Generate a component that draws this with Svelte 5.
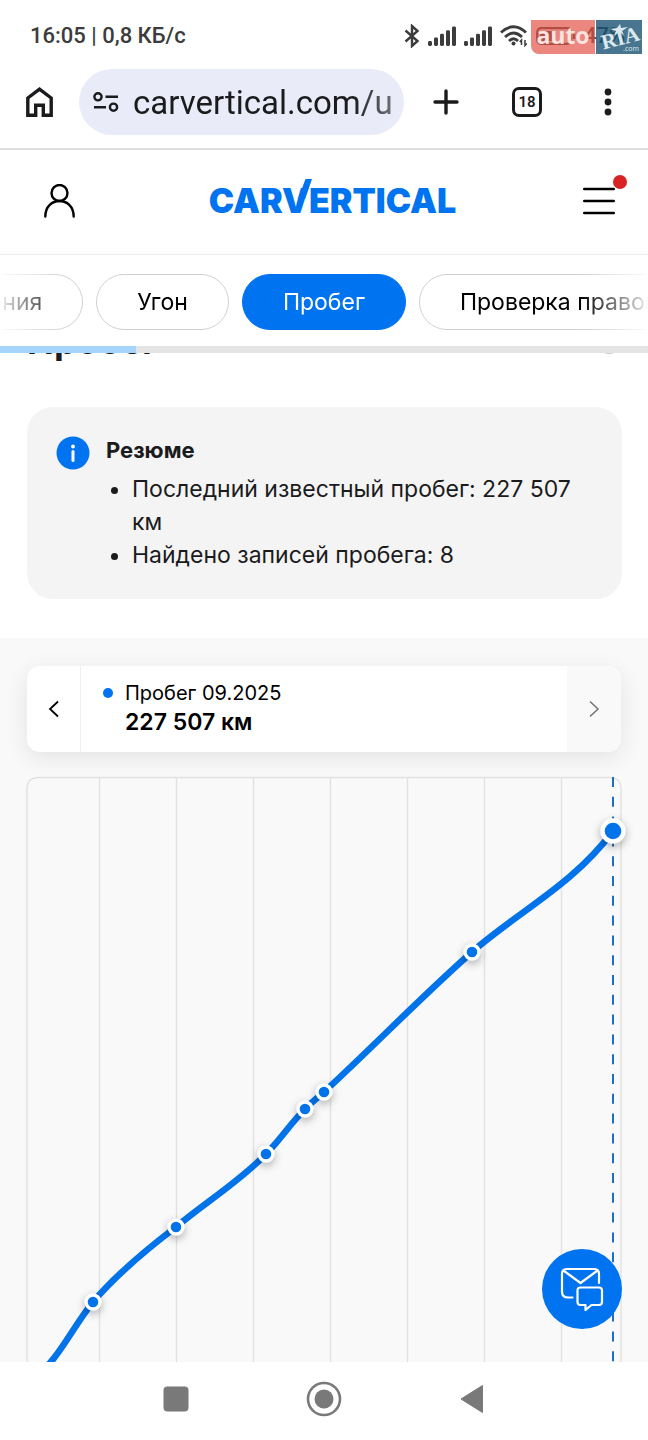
<script lang="ts">
  // Mobile report page: phone chrome, report navigation, then the mileage section and its chart.
  import { onMount } from "svelte";

  const tabs = [
    { id: "damage", label: "Повреждения" },
    { id: "theft", label: "Угон" },
    { id: "mileage", label: "Пробег" },
    { id: "title", label: "Проверка правового статуса" },
  ];
  let active = $state("mileage");
  let tabBar: HTMLElement;

  // Keep the active tab in the middle of the strip.
  function centerActive() {
    const tab = tabBar.querySelector<HTMLElement>(".active");
    if (tab) tabBar.scrollLeft = tab.offsetLeft + tab.offsetWidth / 2 - tabBar.clientWidth / 2;
  }
  onMount(centerActive);

  const gridLines = [73, 150, 227, 304, 381, 458, 535];
  const points = [
    { x: 66, y: 525 },
    { x: 149, y: 450 },
    { x: 239, y: 377 },
    { x: 278, y: 332 },
    { x: 297, y: 315 },
    { x: 445, y: 175 },
  ];
  const current = { x: 586, y: 54 };
  const curve =
    "M2 605 C32 584 42 555 66 525 C88 499 120 472 149 450 C180 424 212 405 239 377 " +
    "C254 362 263 347 278 332 C284 326 290 321 297 315 C347 269 394 220 445 175 C492 134 546 108 586 54";

  const signalBars = [0, 1, 2, 3, 4];
</script>

{#snippet signal()}
  <svg width="28" height="20" viewBox="0 0 28 20" aria-hidden="true">
    {#each signalBars as i}
      <rect x={i * 6} y={15 - i * 3.6} width="4" height={5 + i * 3.6} rx="1.4" fill="#3c3c3c" />
    {/each}
  </svg>
{/snippet}

<div class="screen">
  <div class="status">
    <span class="clock">16:05 | 0,8 КБ/с</span>
    <div class="status-icons">
      <svg width="16" height="24" viewBox="0 0 16 24" fill="none" stroke="#3c3c3c" stroke-width="2.4" aria-hidden="true">
        <path d="M1.5 6.5 L13.5 17 L8 22 V2 L13.5 7 L1.5 17.5" />
      </svg>
      {@render signal()}
      {@render signal()}
      <svg width="28" height="22" viewBox="0 0 28 22" fill="none" stroke="#3c3c3c" stroke-width="2.8" aria-hidden="true">
        <path d="M1 7.5 Q13.5 -4 26 7.5" />
        <path d="M5 12 Q13.5 4 22 12" />
        <path d="M9 16 Q13.5 11.5 18 16" />
        <circle cx="13.5" cy="18.5" r="2" fill="#3c3c3c" stroke="none" />
        <path d="M21.5 20 V15 L19.8 17 M25 15 V20.5 L26.7 18.5" stroke-width="1.5" />
      </svg>
      <svg class="battery" width="40" height="18" viewBox="0 0 40 18" fill="none" aria-hidden="true">
        <rect x="1.2" y="1.2" width="34" height="15.6" rx="4" stroke="#3c3c3c" stroke-width="2.2" />
        <rect x="4" y="4" width="14" height="10" rx="2" fill="#3c3c3c" />
        <path d="M38 6 V12" stroke="#3c3c3c" stroke-width="2.4" />
      </svg>
      <span class="charge">47%</span>
    </div>
    <div class="watermark">
      <span class="auto">auto</span>
      <span class="ria">
        <svg class="star" width="18" height="12" viewBox="0 0 18 12" aria-hidden="true">
          <path d="M10 0 L11 4 L18 3 L12 7 L14 11 L9 8 L4 12 L6 7 L0 5 L7 4 Z" fill="#dce8ee" />
        </svg>
        <span class="ria-name">RIA</span>
        <span class="ria-com">.com</span>
      </span>
    </div>
  </div>

  <div class="browser">
    <button class="home" aria-label="Главная">
      <svg width="27" height="30" viewBox="0 0 27 30" fill="none" stroke="#1b1b1d" stroke-width="3.4" aria-hidden="true">
        <path d="M1.8 11 L13.5 2.2 L25.2 11 V28.2 H17.3 V18.2 H9.7 V28.2 H1.8 Z" />
      </svg>
    </button>
    <label class="address">
      <svg width="26" height="20" viewBox="0 0 26 20" fill="none" stroke="#1b1b1d" stroke-width="2.4" aria-hidden="true">
        <circle cx="5" cy="4.8" r="3.6" />
        <path d="M12.5 4.8 H25 M1 15.2 H13" />
        <circle cx="20.5" cy="15.2" r="3.6" />
      </svg>
      <input type="text" value="carvertical.com/u" aria-label="Адрес" />
    </label>
    <div class="browser-actions">
      <button aria-label="Новая вкладка">
        <svg width="26" height="26" viewBox="0 0 26 26" stroke="#1b1b1d" stroke-width="3.4" stroke-linecap="round" aria-hidden="true">
          <path d="M13 2 V24 M2 13 H24" />
        </svg>
      </button>
      <button aria-label="Вкладки"><span class="tab-count">18</span></button>
      <button aria-label="Меню браузера">
        <svg width="8" height="28" viewBox="0 0 8 28" fill="#1b1b1d" aria-hidden="true">
          <circle cx="4" cy="4" r="3.4" />
          <circle cx="4" cy="14" r="3.4" />
          <circle cx="4" cy="24" r="3.4" />
        </svg>
      </button>
    </div>
  </div>

  <header class="site">
    <button class="account" aria-label="Профиль">
      <svg width="32" height="34" viewBox="0 0 32 34" fill="none" stroke="#000" stroke-width="2.4" stroke-linecap="round" aria-hidden="true">
        <circle cx="15.5" cy="9" r="8" />
        <path d="M1.3 32.5 C1.3 11.8 29.7 11.8 29.7 32.5" />
      </svg>
    </button>
    <a class="logo" href="/">
      CAR<span class="logo-v">V<svg width="14" height="20" viewBox="0 0 14 20" aria-hidden="true"><path d="M7.5 0 H14 L7 20 H0 Z" /></svg></span>ERTICAL
    </a>
    <button class="menu" aria-label="Меню">
      <svg width="32" height="28" viewBox="0 0 32 28" stroke="#000" stroke-width="2.6" stroke-linecap="round" aria-hidden="true">
        <path d="M1.3 2 H30.7 M1.3 14 H30.7 M1.3 26 H30.7" />
      </svg>
      <span class="alert"></span>
    </button>
  </header>

  <nav class="tabs" bind:this={tabBar}>
    {#each tabs as tab (tab.id)}
      <button class="tab" class:active={tab.id === active} onclick={() => (active = tab.id)}>{tab.label}</button>
    {/each}
  </nav>
  <div class="progress"><div class="progress-fill"></div></div>

  <main>
    <section class="intro">
      <div class="title-row">
        <h2>Пробег</h2>
        <span class="help"></span>
      </div>
      <div class="summary">
        <svg width="34" height="34" viewBox="0 0 34 34" aria-hidden="true">
          <circle cx="17" cy="17" r="16.5" fill="#0073f0" />
          <circle cx="17" cy="10.5" r="1.9" fill="#fff" />
          <path d="M17 15.5 V24.5" stroke="#fff" stroke-width="3" stroke-linecap="round" />
        </svg>
        <div class="summary-text">
          <h3>Резюме</h3>
          <ul>
            <li>Последний известный пробег: 227 507 км</li>
            <li>Найдено записей пробега: 8</li>
          </ul>
        </div>
      </div>
    </section>

    <section class="history">
      <div class="readout">
        <button aria-label="Предыдущая запись">
          <svg width="12" height="18" viewBox="0 0 12 18" fill="none" stroke="#000" stroke-width="1.8" aria-hidden="true">
            <path d="M10 1.5 L2 9 L10 16.5" />
          </svg>
        </button>
        <div class="record">
          <span class="dot"></span>
          <div>
            <div class="record-date">Пробег 09.2025</div>
            <div class="record-value">227 507 км</div>
          </div>
        </div>
        <button disabled aria-label="Следующая запись">
          <svg width="12" height="18" viewBox="0 0 12 18" fill="none" stroke="#777" stroke-width="1.6" aria-hidden="true">
            <path d="M2 1.5 L10 9 L2 16.5" />
          </svg>
        </button>
      </div>

      <svg class="chart" viewBox="0 0 594 585" role="img" aria-label="График пробега">
        <path d="M0 585 V12 Q0 0.5 12 0.5 H582 Q594 0.5 594 12 V585" class="grid" />
        {#each gridLines as x}
          <line x1={x - 0.5} x2={x - 0.5} y1="0" y2="585" class="grid" />
        {/each}
        <line x1={current.x} x2={current.x} y1="0" y2="585" class="marker" />
        <path d={curve} class="curve" />
        {#each points as point}
          <circle cx={point.x} cy={point.y} r="7" class="point" />
        {/each}
        <circle cx={current.x} cy={current.y} r="10.5" class="point current" />
      </svg>

      <button class="chat" aria-label="Написать нам">
        <svg width="44" height="44" viewBox="0 0 44 44" fill="none" stroke="#fff" stroke-width="2.2" stroke-linejoin="round" stroke-linecap="round" aria-hidden="true">
          <path d="M12.5 30.5 H8 Q2 30.5 2 24.5 V7 Q2 2 7 2 H34 Q39 2 39 7 V16" />
          <path d="M3.5 3.5 L20.5 16 L37.5 3.5" />
          <path d="M20.5 20.5 H39 Q42 20.5 42 23.5 V35 Q42 38 39 38 H31.5 L25.5 43 V38 H20.5 Q17.5 38 17.5 35 V23.5 Q17.5 20.5 20.5 20.5 Z" />
        </svg>
      </button>
    </section>
  </main>

  <div class="system-nav">
    <button aria-label="Недавние">
      <svg width="26" height="26" viewBox="0 0 26 26" aria-hidden="true"><rect x="0.5" y="0.5" width="25" height="25" rx="4" fill="#797979" /></svg>
    </button>
    <button aria-label="Домой">
      <svg width="36" height="36" viewBox="0 0 36 36" aria-hidden="true">
        <circle cx="18" cy="18" r="16" fill="none" stroke="#797979" stroke-width="2.6" />
        <circle cx="18" cy="18" r="9.5" fill="#797979" />
      </svg>
    </button>
    <button aria-label="Назад">
      <svg width="24" height="30" viewBox="0 0 24 30" aria-hidden="true"><path d="M1 15 L22.5 1.5 V28.5 Z" fill="#797979" stroke="#797979" stroke-linejoin="round" /></svg>
    </button>
  </div>
</div>

<style>
  :global(body) {
    background: #fff;
  }
  .screen {
    font-family: Inter, "Noto Sans", sans-serif;
    color: #1b1b1d;
    overflow: hidden;
  }
  button {
    display: flex;
    align-items: center;
    justify-content: center;
    padding: 0;
    border: 0;
    background: none;
    font: inherit;
    color: inherit;
    cursor: pointer;
  }
  svg {
    display: block;
    flex: none;
  }

  /* phone status bar */
  .status {
    position: relative;
    display: flex;
    align-items: center;
    justify-content: space-between;
    height: 69px;
    padding: 2px 8px 0 30px;
    box-sizing: border-box;
    font-family: Roboto, sans-serif;
    font-size: 22px;
    font-weight: 500;
    color: #3c3c3c;
  }
  .status-icons {
    display: flex;
    align-items: center;
    gap: 8px;
  }
  .charge {
    width: 56px;
  }
  .watermark {
    position: absolute;
    top: 20px;
    right: 6px;
    display: flex;
    gap: 1px;
    height: 34px;
    font-family: "Open Sans", sans-serif;
  }
  .auto {
    width: 64px;
    border-radius: 0 0 0 8px;
    background: rgba(226, 84, 72, 0.7);
    color: #fbe3df;
    font-size: 23px;
    font-weight: 700;
    line-height: 31px;
    text-align: center;
  }
  .ria {
    position: relative;
    width: 46px;
    background: rgba(26, 84, 116, 0.8);
    color: #dce8ee;
  }
  .star {
    position: absolute;
    top: 4px;
    left: 14px;
  }
  .ria-name {
    position: absolute;
    top: 8px;
    left: 5px;
    font-family: "Liberation Serif", serif;
    font-size: 21px;
    font-weight: 700;
    line-height: 20px;
    transform: rotate(-14deg);
  }
  .ria-com {
    position: absolute;
    right: 3px;
    bottom: 1px;
    font-size: 7px;
    line-height: 8px;
  }

  /* browser toolbar */
  .browser {
    display: flex;
    align-items: center;
    padding: 0 0 13px 26px;
    border-bottom: 2px solid #dedede;
  }
  .address {
    flex: 1;
    min-width: 0;
    display: flex;
    align-items: center;
    gap: 14px;
    height: 66px;
    margin-left: 26px;
    padding: 0 12px 0 14px;
    border-radius: 33px;
    background: #e9ecf8;
    box-sizing: border-box;
  }
  .address input {
    flex: 1;
    min-width: 0;
    padding: 0;
    border: 0;
    outline: 0;
    background: none;
    font-family: Roboto, sans-serif;
    font-size: 33px;
    color: #1b1b1d;
    -webkit-mask-image: linear-gradient(to left, rgba(0, 0, 0, 0.6), #000 40px);
    mask-image: linear-gradient(to left, rgba(0, 0, 0, 0.6), #000 40px);
  }
  .browser-actions {
    display: flex;
    gap: 1px;
    margin-left: 2px;
  }
  .browser-actions button {
    width: 80px;
    height: 66px;
  }
  .tab-count {
    width: 30px;
    height: 30px;
    border: 3px solid #1b1b1d;
    border-radius: 7px;
    box-sizing: border-box;
    font-family: Roboto, sans-serif;
    font-size: 15px;
    font-weight: 600;
    line-height: 24px;
  }

  /* site header */
  .site {
    display: flex;
    align-items: center;
    justify-content: space-between;
    height: 105px;
    padding: 0 33px 2px 44px;
    border-bottom: 1px solid #ececec;
    box-sizing: border-box;
  }
  .account {
    width: 38px;
    justify-content: flex-start;
  }
  .logo {
    color: #0073f0;
    font-size: 34px;
    font-weight: 900;
    line-height: 40px;
    text-decoration: none;
  }
  .logo-v {
    position: relative;
  }
  /* the long arm of the V rises above the other letters */
  .logo-v svg {
    position: absolute;
    right: -3px;
    bottom: 22px;
    fill: #0073f0;
  }
  .menu {
    position: relative;
  }
  .alert {
    position: absolute;
    top: -12px;
    right: -12px;
    width: 14px;
    height: 14px;
    border-radius: 50%;
    background: #d92323;
  }

  .tabs {
    position: relative;
    display: flex;
    gap: 13px;
    padding: 19px 0 16px;
    overflow-x: auto;
    scrollbar-width: none;
    -webkit-mask-image: linear-gradient(to right, transparent, rgba(0, 0, 0, 0.2) 8px, #000 68px, #000 calc(100% - 68px), rgba(0, 0, 0, 0.2) calc(100% - 8px), transparent);
    mask-image: linear-gradient(to right, transparent, rgba(0, 0, 0, 0.2) 8px, #000 68px, #000 calc(100% - 68px), rgba(0, 0, 0, 0.2) calc(100% - 8px), transparent);
  }
  .tab {
    flex: none;
    height: 56px;
    padding: 0 40px;
    border: 1px solid #d0d0d0;
    border-radius: 28px;
    font-size: 23px;
    color: #000;
    white-space: nowrap;
  }
  .tab.active {
    border-color: #0073f0;
    background: #0073f0;
    color: #fff;
  }
  .progress {
    height: 7px;
    background: #e4e4e4;
  }
  .progress-fill {
    width: 21%;
    height: 100%;
    background: #a6d5fc;
  }

  /* mileage section */
  .intro {
    padding: 0 26px 39px 27px;
    overflow: hidden;
  }
  .title-row {
    display: flex;
    align-items: center;
    justify-content: space-between;
    margin-top: -32px;
    margin-bottom: 46px;
  }
  h2 {
    margin: 0;
    font-size: 36px;
    font-weight: 700;
    line-height: 40px;
  }
  .help {
    width: 26px;
    height: 26px;
    border: 2px solid #ccc;
    border-radius: 50%;
    box-sizing: border-box;
  }
  .summary {
    display: flex;
    gap: 16px;
    padding: 27px 40px 27px 29px;
    border-radius: 26px;
    background: #f4f4f4;
  }
  .summary > svg {
    margin-top: 2px;
  }
  .summary-text {
    font-size: 23px;
    line-height: 33px;
  }
  h3 {
    margin: 0 0 6px;
    font-size: 22px;
    font-weight: 700;
    line-height: 33px;
  }
  ul {
    margin: 0;
    padding-left: 26px;
  }

  .history {
    position: relative;
    padding: 28px 27px 0;
    background: #f9f9f9;
    overflow: hidden;
  }
  .readout {
    display: flex;
    height: 86px;
    margin-bottom: 25px;
    border-radius: 13px;
    background: #fff;
    box-shadow: 0 6px 24px rgba(0, 0, 0, 0.09);
    overflow: hidden;
  }
  .readout button {
    width: 54px;
    border-right: 1px solid #f0f0f0;
  }
  .readout button:disabled {
    border: 0;
    background: #f9f9f9;
  }
  .record {
    flex: 1;
    display: flex;
    gap: 12px;
    padding: 13px 22px;
  }
  .dot {
    width: 10px;
    height: 10px;
    margin-top: 9px;
    border-radius: 50%;
    background: #0073f0;
  }
  .record-date {
    font-size: 20px;
    line-height: 28px;
    color: #000;
  }
  .record-value {
    font-size: 23px;
    font-weight: 600;
    line-height: 30px;
    color: #000;
  }
  .chart {
    width: 100%;
    height: auto;
    overflow: visible;
  }
  .grid {
    fill: none;
    stroke: #e2e2e2;
    stroke-width: 1.4;
  }
  .marker {
    stroke: #1c6fc4;
    stroke-width: 2;
    stroke-dasharray: 10 9.8;
  }
  .curve {
    fill: none;
    stroke: #0073ea;
    stroke-width: 6.5;
  }
  .point {
    fill: #0073ea;
    stroke: #fff;
    stroke-width: 3.4;
    filter: drop-shadow(0 3px 4px rgba(0, 0, 0, 0.3));
  }
  .current {
    stroke-width: 4.4;
  }
  .chat {
    position: absolute;
    right: 26px;
    bottom: 33px;
    width: 80px;
    height: 80px;
    border-radius: 50%;
    background: #0073f0;
  }

  .system-nav {
    display: flex;
    justify-content: center;
    gap: 100px;
    padding: 13px 0 17px;
  }
  .system-nav button {
    width: 48px;
    height: 48px;
  }
</style>
